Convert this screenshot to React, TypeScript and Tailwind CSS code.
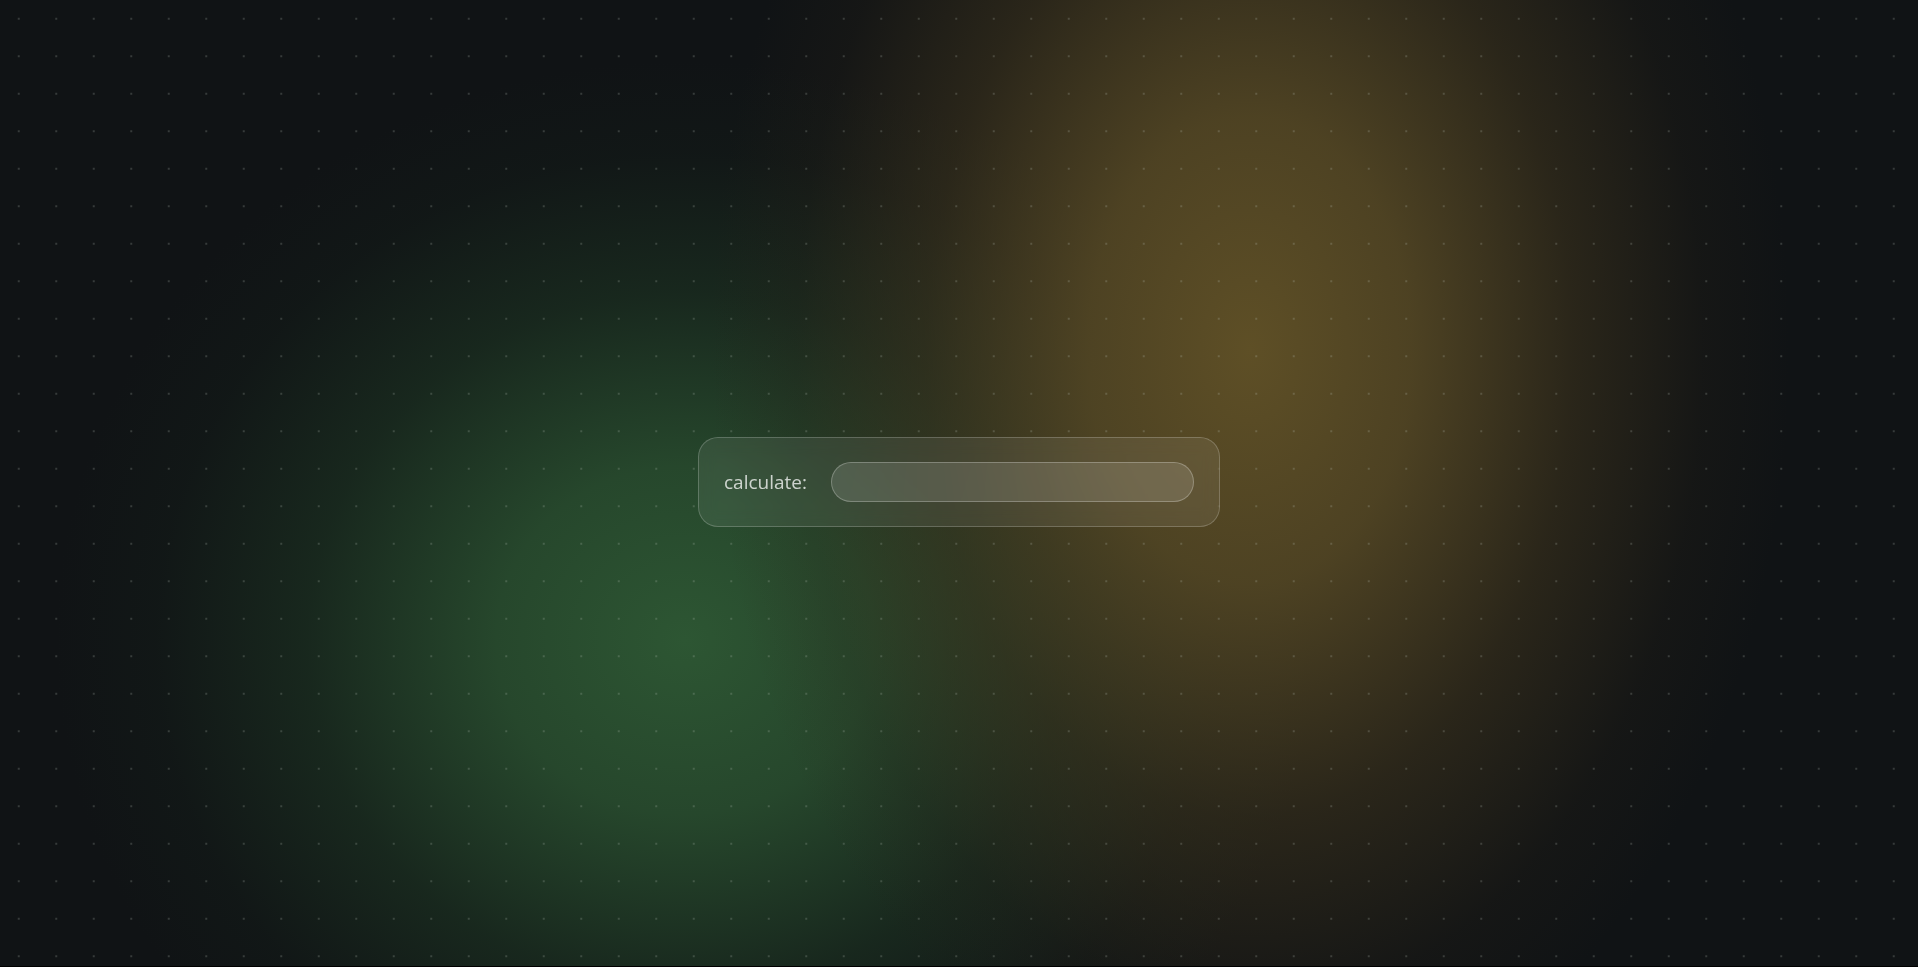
import { useState } from 'react'

export default function App() {
  const [expr, setExpr] = useState('')

  return (
    <div className="h-[967px] w-full bg-black">
      <div className="h-[966px] w-full bg-[#101315] bg-[image:radial-gradient(ellipse_540px_780px_at_1250px_350px,rgba(94,79,38,1)_0%,rgba(88,74,37,0.85)_30%,rgba(66,55,30,0.52)_60%,rgba(44,37,24,0.2)_84%,transparent_100%),radial-gradient(ellipse_630px_580px_at_685px_640px,rgba(45,86,51,1)_0%,rgba(42,80,48,0.85)_30%,rgba(32,60,38,0.5)_60%,rgba(24,42,30,0.18)_84%,transparent_100%)]">
        <div className="flex h-full w-full items-center justify-center pb-[2px] bg-[image:radial-gradient(circle_at_center,rgba(190,200,190,0.22)_0.9px,transparent_1.4px)] bg-[length:37.5px_37.5px]">
          <div className="flex h-[90px] w-[522px] items-center gap-[25px] rounded-[20px] border border-white/20 bg-white/[0.08] px-[25px] backdrop-blur-sm">
            <label
              htmlFor="calc"
              className="w-[82px] shrink-0 text-[19px] text-white/75 font-['Open_Sans',sans-serif]"
            >
              calculate:
            </label>
            <input
              id="calc"
              value={expr}
              onChange={(e) => setExpr(e.target.value)}
              className="h-10 min-w-0 flex-1 rounded-full border border-white/25 bg-white/[0.12] px-4 text-white/90 outline-none font-['Open_Sans',sans-serif]"
            />
          </div>
        </div>
      </div>
    </div>
  )
}
